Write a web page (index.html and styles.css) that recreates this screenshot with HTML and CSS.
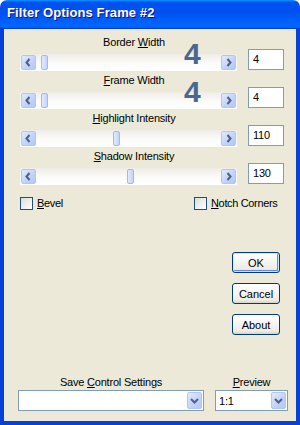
FILE: index.html
```html
<!DOCTYPE html>
<html lang="en">
<head>
    <meta charset="UTF-8">
    <meta name="viewport" content="width=device-width, initial-scale=1.0">
    <title>Filter Options Frame #2</title>
    <link rel="stylesheet" href="styles.css">
</head>
<body>
  <div class="window">
    <div class="titlebar">Filter Options Frame #2</div>
    <div class="frame">

      <div class="group">
        <div class="group-label">Border <u>W</u>idth</div>
        <div class="group-row">
          <div class="track">
            <span class="arrow"><svg width="15" height="15" viewBox="0 0 15 15"><polyline points="8.5,4 5.5,7.5 8.5,11" /></svg></span>
            <div class="channel"><span class="thumb" style="margin-left:5px"></span></div>
            <span class="arrow"><svg width="15" height="15" viewBox="0 0 15 15"><polyline points="6.5,4 9.5,7.5 6.5,11" /></svg></span>
          </div>
          <div class="edit">4</div>
        </div>
        <div class="big-digit">4</div>
      </div>

      <div class="group">
        <div class="group-label"><u>F</u>rame Width</div>
        <div class="group-row">
          <div class="track">
            <span class="arrow"><svg width="15" height="15" viewBox="0 0 15 15"><polyline points="8.5,4 5.5,7.5 8.5,11" /></svg></span>
            <div class="channel"><span class="thumb" style="margin-left:5px"></span></div>
            <span class="arrow"><svg width="15" height="15" viewBox="0 0 15 15"><polyline points="6.5,4 9.5,7.5 6.5,11" /></svg></span>
          </div>
          <div class="edit">4</div>
        </div>
        <div class="big-digit">4</div>
      </div>

      <div class="group">
        <div class="group-label"><u>H</u>ighlight Intensity</div>
        <div class="group-row">
          <div class="track">
            <span class="arrow"><svg width="15" height="15" viewBox="0 0 15 15"><polyline points="8.5,4 5.5,7.5 8.5,11" /></svg></span>
            <div class="channel"><span class="thumb" style="margin-left:77px"></span></div>
            <span class="arrow"><svg width="15" height="15" viewBox="0 0 15 15"><polyline points="6.5,4 9.5,7.5 6.5,11" /></svg></span>
          </div>
          <div class="edit">110</div>
        </div>
      </div>

      <div class="group">
        <div class="group-label"><u>S</u>hadow Intensity</div>
        <div class="group-row">
          <div class="track">
            <span class="arrow"><svg width="15" height="15" viewBox="0 0 15 15"><polyline points="8.5,4 5.5,7.5 8.5,11" /></svg></span>
            <div class="channel"><span class="thumb" style="margin-left:91px"></span></div>
            <span class="arrow"><svg width="15" height="15" viewBox="0 0 15 15"><polyline points="6.5,4 9.5,7.5 6.5,11" /></svg></span>
          </div>
          <div class="edit">130</div>
        </div>
      </div>

      <div class="checks">
        <label class="check check-first"><span class="box"></span><span><u>B</u>evel</span></label>
        <label class="check"><span class="box"></span><span><u>N</u>otch Corners</span></label>
      </div>

      <div class="buttons">
        <button class="btn btn-default">OK</button>
        <button class="btn">Cancel</button>
        <button class="btn">About</button>
      </div>

      <div class="bottom">
        <div class="field field-save">
          <div class="field-label">Save <u>C</u>ontrol Settings</div>
          <div class="combo">
            <span class="combo-text"></span>
            <span class="drop"><svg width="15" height="17" viewBox="0 0 15 17"><polyline points="4,7 7.5,10.5 11,7" /></svg></span>
          </div>
        </div>
        <div class="field field-preview">
          <div class="field-label"><u>P</u>review</div>
          <div class="combo">
            <span class="combo-text">1:1</span>
            <span class="drop"><svg width="15" height="17" viewBox="0 0 15 17"><polyline points="4,7 7.5,10.5 11,7" /></svg></span>
          </div>
        </div>
      </div>

    </div>
  </div>
</body>
</html>
```

FILE: styles.css
```css
body{
    margin: 0;
    width: 300px;
    height: 425px;
    overflow: hidden;
    background-color: #ffffff;
    font-family: "Liberation Sans", Arial, sans-serif;
    font-size: 11px;
    letter-spacing: -0.2px;
    color: #000000;
}
.window{
    width: 300px;
    height: 425px;
    display: flex;
    flex-direction: column;
}
.titlebar{
    height: 29px;
    box-sizing: border-box;
    padding: 5px 0 0 7px;
    line-height: 15px;
    font-size: 13px;
    font-weight: bold;
    letter-spacing: 0.1px;
    color: #ffffff;
    text-shadow: 1px 1px 0 #0f1089;
    border-radius: 7px 7px 0 0;
    background: linear-gradient(180deg, #0997ff, #0053ee 8%, #0050ee 40%, #0066ff 88%, #0066ff 93%, #005bff 95%, #003dd7 96%, #003dd7);
}
.frame{
    flex: 1;
    display: flex;
    flex-direction: column;
    padding-top: 7px;
    background-color: #ece9d8;
    border-style: solid;
    border-color: #0841d6;
    border-width: 0 4px 4px 3px;
    box-shadow: inset 1px 0 0 #0b3fc8;
}
.group{
    position: relative;
    margin: 0 0 3px 17px;
}
.group-label{
    width: 228px;
    height: 13px;
    line-height: 13px;
    text-align: center;
}
.group-row{
    display: flex;
    align-items: flex-start;
    gap: 11px;
    height: 22px;
}
.track{
    width: 217px;
    height: 17px;
    margin-top: 5px;
    box-sizing: border-box;
    padding: 0 1px;
    display: flex;
    align-items: center;
    background: linear-gradient(180deg, #eeede5, #fbfbf8 55%, #ffffff);
}
.arrow{
    width: 15px;
    height: 15px;
    box-sizing: border-box;
    border: 1px solid #b3c6f2;
    border-radius: 2px;
    background: linear-gradient(135deg, #e3ebfd, #c0d2fa 60%, #b2c8f6);
    display: flex;
    align-items: center;
    justify-content: center;
}
.arrow svg{
    margin: -1px;
}
.arrow polyline,
.drop polyline{
    fill: none;
    stroke: #4d6185;
    stroke-width: 2;
}
.channel{
    flex: 1;
    height: 15px;
    display: flex;
    align-items: center;
}
.thumb{
    width: 7px;
    height: 15px;
    box-sizing: border-box;
    border: 1px solid #a3b8ec;
    border-radius: 2px;
    background: linear-gradient(90deg, #e2eafd, #c3d3fb);
}
.edit{
    width: 36px;
    height: 21px;
    box-sizing: border-box;
    border: 1px solid #7f9db9;
    background-color: #ffffff;
    padding-left: 4px;
    line-height: 19px;
}
.big-digit{
    position: absolute;
    left: 164px;
    top: 3px;
    font-size: 30px;
    line-height: 30px;
    font-weight: bold;
    letter-spacing: 0;
    color: #49688f;
}
.checks{
    display: flex;
    margin: 9px 0 0 17px;
    letter-spacing: -0.35px;
}
.check{
    display: flex;
    align-items: center;
    gap: 4px;
    height: 13px;
    line-height: 13px;
}
.check-first{
    width: 174px;
}
.box{
    width: 13px;
    height: 13px;
    box-sizing: border-box;
    border: 1px solid #1c5180;
    background: linear-gradient(135deg, #dcdcd7, #ffffff);
}
.buttons{
    display: flex;
    flex-direction: column;
    gap: 10px;
    margin: 42px 0 0 229px;
}
.btn{
    width: 48px;
    height: 21px;
    padding: 0;
    font-family: "Liberation Sans", Arial, sans-serif;
    font-size: 11px;
    color: #000000;
    border: 1px solid #003c74;
    border-radius: 3px;
    background: linear-gradient(180deg, #ffffff, #ecebe6 86%, #d6d0c5);
}
.btn-default{
    box-shadow: inset 0 0 0 1px #cee7ff, inset -1px -1px 0 1px #6982ee;
}
.bottom{
    margin: auto 0 0 15px;
    padding-bottom: 10px;
    display: flex;
    gap: 11px;
}
.field-label{
    height: 13px;
    line-height: 13px;
    margin-bottom: 1px;
    text-align: center;
}
.field-save .combo{
    width: 186px;
}
.field-preview .combo{
    width: 73px;
}
.combo{
    height: 21px;
    box-sizing: border-box;
    border: 1px solid #7f9db9;
    background-color: #ffffff;
    padding: 1px;
    display: flex;
    justify-content: space-between;
    align-items: center;
}
.combo-text{
    padding-left: 2px;
}
.drop{
    width: 15px;
    height: 17px;
    box-sizing: border-box;
    border: 1px solid #b3c6f2;
    border-radius: 2px;
    background: linear-gradient(135deg, #e3ebfd, #c0d2fa 60%, #b2c8f6);
    display: flex;
    align-items: center;
    justify-content: center;
}
.drop svg{
    margin: -1px;
}
```
